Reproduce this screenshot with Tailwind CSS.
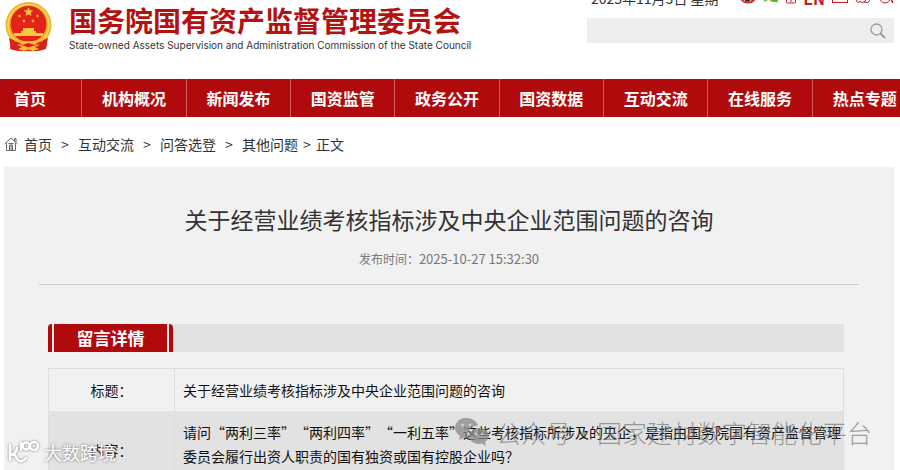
<!DOCTYPE html>
<html lang="zh-CN">

<head>
    <meta charset="UTF-8">
    <meta name="viewport" content="width=device-width, initial-scale=1.0">
    <script src="https://cdn.jsdelivr.net/npm/@tailwindcss/browser@4"></script>
    <title>国务院国有资产监督管理委员会</title>
</head>

<body class="relative h-screen overflow-hidden flex flex-col bg-white text-sm text-[#333] font-['Noto_Sans_CJK_SC',sans-serif]">
    <!-- Header -->
    <header class="flex justify-between h-[79px] shrink-0 pl-1 pr-1.5">
        <a href="#" class="flex items-start">
            <svg class="w-12 h-[52px] mt-px" viewBox="0 0 48 52" fill="none">
                <path d="M8 33L6 48Q14 51 24.500 50Q34 51 42 48L41 33Z" fill="#d8201c" />
                <circle cx="24.500" cy="24" r="23" fill="#f3b32b" />
                <circle cx="24.500" cy="24" r="20.500" stroke="#fbd45a" stroke-width="1.500" />
                <circle cx="24.500" cy="23" r="18" fill="#e2231a" />
                <path d="M24.500 6l1.300 3.300 3.500.2-2.700 2.200.9 3.400-3-1.900-3 1.900.9-3.400-2.700-2.200 3.500-.2z" fill="#fbc93d" />
                <g fill="#f5a62f">
                    <circle cx="15.500" cy="15" r="1.400" /><circle cx="33.500" cy="15" r="1.400" />
                    <circle cx="20" cy="20" r="1.400" /><circle cx="29" cy="20" r="1.400" />
                </g>
                <path d="M19 27h11v3h2v2h7v3H10v-3h7v-2h2z" fill="#fbc93d" />
                <path d="M5 37q7 4 12 2l7.500 3 7.500-3q5 2 12-2l-2 11-8-1 1-4-10.500 3.500L14 43l1 4-8 1z" fill="#d8201c" />
                <path d="M11 37q6 4 13.500 3 7.500 1 13.500-3l1 3q-6 1-8 4l-6.500-2-6.500 2q-2-3-8-4z" fill="#f7bb35" />
                <path d="M14 48l6-3 4.500 2 4.500-2 6 3-6 2-4.500-1.500L20 50z" fill="#f7bb35" />
            </svg>
            <span class="ml-[17px] mt-[3px] flex flex-col whitespace-nowrap">
                <span class="text-[28px] leading-[34px] font-bold text-[#b3120f]">国务院国有资产监督管理委员会</span>
                <span class="text-[10px] leading-4 text-[#333] font-[Inter,sans-serif]">State-owned Assets Supervision and Administration Commission of the State Council</span>
            </span>
        </a>

        <div class="w-[307px]">
            <div class="flex items-center justify-between h-5 -mt-3 pl-1 whitespace-nowrap">
                <span>2025年11月3日 星期<span class="text-[#bbb]">一</span></span>
                <span class="flex items-start gap-[7px] text-[#c8171e]">
                    <a href="#" aria-label="微博">
                        <svg class="w-4 h-4" viewBox="0 0 16 16"><ellipse cx="8" cy="10" rx="7.500" ry="5.500" fill="#d52b2a" /><ellipse cx="7.500" cy="10" rx="5" ry="3.500" fill="#fff" /><circle cx="7.500" cy="10.500" r="3" fill="#222" /></svg>
                    </a>
                    <a href="#" aria-label="微信">
                        <svg class="w-4 h-4" viewBox="0 0 16 16"><ellipse cx="6" cy="7" rx="6" ry="5" fill="#58b524" /><ellipse cx="11" cy="10" rx="5" ry="4" fill="#58b524" /><path d="M2 9l-1 5 4-2zM12 12l2 3 1-4z" fill="#58b524" /></svg>
                    </a>
                    <a href="#" aria-label="手机版">
                        <svg class="w-2.5 h-4" viewBox="0 0 10 16" fill="none" stroke="currentColor"><rect x=".5" y="1.500" width="9" height="13.500" rx="1" /><path d="M1 8.500h8M1 11.500h8M5 8v6" /></svg>
                    </a>
                    <a href="#" class="text-base leading-5 font-bold">EN</a>
                    <a href="#" aria-label="邮箱">
                        <svg class="w-4 h-4" viewBox="0 0 16 16" fill="none" stroke="currentColor"><rect x=".5" y="3.500" width="15" height="11" /><path d="M1 4l7 6 7-6" /></svg>
                    </a>
                    <a href="#" aria-label="留言">
                        <svg class="w-4 h-4" viewBox="0 0 16 16" fill="none" stroke="currentColor"><path d="M3 14.500q-2-1-2-4 0-5 5-5t5 5q0 4-4 4l-2-1zM11 6q4 0 4 4 0 3-2 4.500L9 14" /></svg>
                    </a>
                    <a href="#" aria-label="无障碍">
                        <svg class="w-4 h-4" viewBox="0 0 16 16" fill="none" stroke="currentColor"><circle cx="7" cy="10" r="5" /><path d="M7 2v7h5l3 6" stroke-width="1.500" /></svg>
                    </a>
                </span>
            </div>
            <form class="mt-2.5 flex items-center h-[25px] bg-[#eee]">
                <input type="text" aria-label="搜索" class="flex-1 min-w-0 h-full px-2 bg-transparent outline-none">
                <button type="submit" aria-label="搜索" class="mr-2">
                    <svg class="w-4 h-4" viewBox="0 0 16 16" fill="none" stroke="#999" stroke-width="1.300"><circle cx="6.500" cy="6.500" r="5.500" /><path d="M10.500 10.500L15 15" stroke-width="1.800" /></svg>
                </button>
            </form>
        </div>
    </header>

    <!-- Main menu -->
    <nav class="flex shrink-0 h-[38px] bg-[#b00a0d] text-base leading-[38px] font-bold text-white text-center whitespace-nowrap divide-x divide-[#cf5a5a]">
        <a href="#" class="flex-82 min-w-0 text-left"><span class="ml-3.5">首页</span></a>
        <a href="#" class="flex-104 min-w-0">机构概况</a>
        <a href="#" class="flex-104 min-w-0">新闻发布</a>
        <a href="#" class="flex-104 min-w-0">国资监管</a>
        <a href="#" class="flex-104 min-w-0">政务公开</a>
        <a href="#" class="flex-104 min-w-0">国资数据</a>
        <a href="#" class="flex-104 min-w-0">互动交流</a>
        <a href="#" class="flex-104 min-w-0">在线服务</a>
        <a href="#" class="flex-88 min-w-0 text-left"><span class="ml-5">热点专题</span></a>
    </nav>

    <!-- Breadcrumb -->
    <div class="flex items-center shrink-0 h-[50px] pt-1 pl-1 whitespace-nowrap">
        <svg class="w-3.5 h-4 mr-1.5" viewBox="0 0 14 16" fill="none" stroke="#666"><path d="M.5 8L7 2l6.500 6M2.500 7v7.500h9V7M10.500 5V2.500h1.500V6M5.500 14V9h3v5M4.500 7.500h5M7 9v5" /></svg>
        <a href="#">首页</a>
        <span class="w-[26px] text-center">&gt;</span>
        <a href="#">互动交流</a>
        <span class="w-[26px] text-center">&gt;</span>
        <a href="#">问答选登</a>
        <span class="w-[26px] text-center">&gt;</span>
        <a href="#">其他问题</a>
        <span class="w-[18px] text-center">&gt;</span>
        <span>正文</span>
    </div>

    <!-- Article -->
    <main class="flex-1 ml-1 mr-1.5 bg-[#f1f1f1]">
        <div class="mx-[35px] pt-9 h-[118px] border-b border-[#ccc] text-center">
            <h1 class="text-[23px] leading-8">关于经营业绩考核指标涉及中央企业范围问题的咨询</h1>
            <p class="mt-3.5 text-xs leading-5 text-[#777]">发布时间：<time class="text-[13px]">2025-10-27 15:32:30</time></p>
        </div>

        <section class="ml-11 mr-[50px] mt-[39px]">
            <div class="h-7 bg-[#e2e2e2]">
                <h2 class="flex w-[125px] h-full bg-[#b00a0d] rounded-t-sm px-1 text-[17px] leading-7 font-bold text-white text-center">
                    <span class="flex-1 border-x-2 border-white/90">留言详情</span>
                </h2>
            </div>

            <table class="mt-4 w-full table-fixed border-collapse border border-[#ddd] text-[#111] leading-6">
                <tr class="h-[42px]">
                    <th scope="row" class="w-[126px] border-r border-[#ddd] font-normal">标题：</th>
                    <td class="pl-2">关于经营业绩考核指标涉及中央企业范围问题的咨询</td>
                </tr>
                <tr class="h-20 bg-[#e2e2e2]">
                    <th scope="row" class="border-r border-[#ddd] font-normal">内容：</th>
                    <td class="pl-2 pt-[9px] align-top [text-spacing-trim:space-all]">请问“两利三率”“两利四率”“一利五率”这些考核指标所涉及的央企，是指由国务院国有资产监督管理委员会履行出资人职责的国有独资或国有控股企业吗？</td>
                </tr>
            </table>
        </section>
    </main>

    <!-- Watermarks -->
    <div class="absolute right-7 bottom-[22px] flex items-center text-[25px] leading-8 font-light text-[#777]/70 whitespace-nowrap pointer-events-none">
        <svg class="w-9 h-8 mr-1.5" viewBox="0 0 36 32" fill="#888" fill-opacity=".75">
            <path d="M12 2C5 2 1 7 1 12c0 3 2 6 5 8l-1 4 5-2.500h4C13 14 19 9 24 10 23 5 18 2 12 2z" />
            <path d="M25 12c-6 0-10 4-10 8s4 8 10 8l3-.5 4 2.500-1-4c2-1.500 4-3.500 4-6 0-4-4-8-10-8z" />
            <g fill="#ddd"><circle cx="8.500" cy="9" r="1.500" /><circle cx="16" cy="9" r="1.500" /><circle cx="22" cy="18" r="1.200" /><circle cx="28" cy="18" r="1.200" /></g>
        </svg>
        <span>公众号</span>
        <span class="w-[26px] text-center">·</span>
        <span>国家建材数字智能化平台</span>
    </div>
    <div class="absolute left-2 bottom-1 flex items-center gap-1 text-lg leading-7 text-white text-shadow-[0_0_3px_#666] pointer-events-none">
        <svg class="w-8 h-7 drop-shadow-[0_0_1px_#777]" viewBox="0 0 32 28" fill="none" stroke="#fff" stroke-width="2.500" stroke-linecap="round">
            <path d="M2 7v15M3 17q5-1 6-7M4 16q4 1 5 5 4 5 9-1" />
            <circle cx="18" cy="8" r="3.500" /><circle cx="26" cy="8" r="4" /><path d="M13 5v7" />
        </svg>
        <span>大数跨境</span>
    </div>
</body>

</html>
